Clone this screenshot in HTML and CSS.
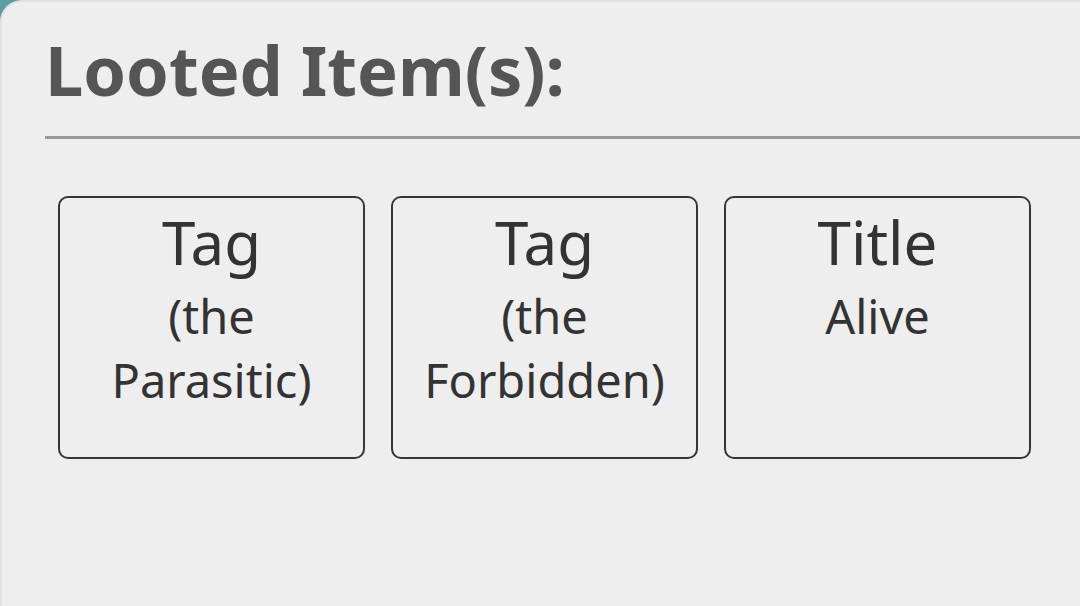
FILE: index.html
```html
<!DOCTYPE html>
<html>
<head>
<meta charset="utf-8">
<link rel="stylesheet" href="styles.css">
</head>
<body>
<div class="panel">
  <h1 class="heading">Looted Item(s):</h1>
  <div class="rule"></div>
  <div class="cards">
    <div class="card"><div class="card-title">Tag</div><div class="card-detail">(the Parasitic)</div></div>
    <div class="card"><div class="card-title">Tag</div><div class="card-detail">(the Forbidden)</div></div>
    <div class="card"><div class="card-title">Title</div><div class="card-detail">Alive</div></div>
  </div>
</div>
</body>
</html>
```
FILE: styles.css
```css
html, body {
  margin: 0;
  padding: 0;
  width: 1080px;
  height: 606px;
  overflow: hidden;
  background: #5f9ea0;
}
.panel {
  box-sizing: border-box;
  width: 1080px;
  height: 606px;
  background: #eeeeee;
  border-top: 2px solid #e2e2e2;
  border-left: 2px solid #e2e2e2;
  border-top-left-radius: 22px;
  padding: 28px 0 0 43px;
  font-family: "Noto Sans", "Open Sans", sans-serif;
}
.heading {
  margin: 0;
  font-size: 68.5px;
  line-height: 80px;
  font-weight: 700;
  color: #555555;
}
.rule {
  margin-top: 26px;
  height: 3px;
  background: #999999;
}
.cards {
  display: grid;
  grid-template-columns: 307px 307px 307px;
  column-gap: 26px;
  margin: 57px 0 0 13px;
}
.card {
  box-sizing: border-box;
  height: 263px;
  border: 2px solid #363636;
  border-radius: 10px;
  padding: 8px 14px 0;
  text-align: center;
  color: #333333;
}
.card-title {
  font-size: 60px;
  line-height: 72px;
  margin-bottom: 6px;
}
.card-detail {
  font-size: 47px;
  line-height: 64px;
}
```
